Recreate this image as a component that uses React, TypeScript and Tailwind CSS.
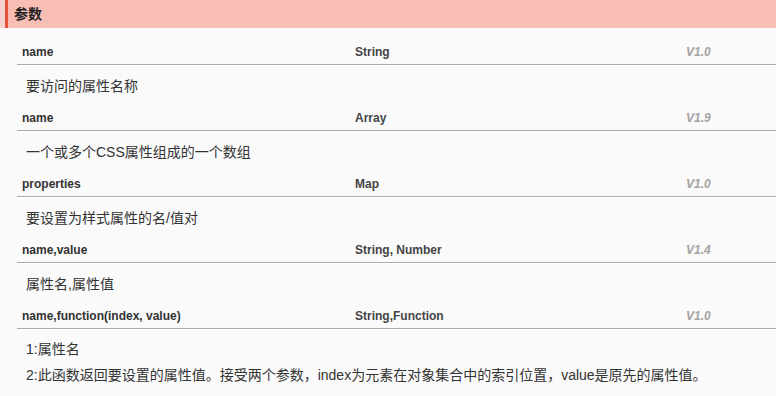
const rows = [
  { name: "name", type: "String", ver: "V1.0", desc: "要访问的属性名称" },
  { name: "name", type: "Array", ver: "V1.9", desc: "一个或多个CSS属性组成的一个数组" },
  { name: "properties", type: "Map", ver: "V1.0", desc: "要设置为样式属性的名/值对" },
  { name: "name,value", type: "String, Number", ver: "V1.4", desc: "属性名,属性值" },
  {
    name: "name,function(index, value)",
    type: "String,Function",
    ver: "V1.0",
    desc: [
      "1:属性名",
      "2:此函数返回要设置的属性值。接受两个参数，index为元素在对象集合中的索引位置，value是原先的属性值。",
    ],
  },
];

export default function App() {
  return (
    <div
      className="w-[776px] h-[396px] bg-[#fafafa] overflow-hidden text-[#333]"
      style={{ fontFamily: '"Liberation Sans", "Noto Sans CJK SC", sans-serif' }}
    >
      <div className="flex h-[28px] bg-[#f8bdb3]">
        <div className="w-[5px] bg-[#fad3cc]" />
        <div className="w-[3px] bg-[#e5533a]" />
        <div className="flex items-center pl-[6px] text-[14px] font-bold text-[#222]">参数</div>
      </div>

      <div className="ml-[17px] mt-[6px]">
        {rows.map((r, i) => (
          <div key={i}>
            <div className="grid grid-cols-[333px_331px_1fr] h-[31px] pt-[10px] border-b border-[#aaa] text-[12px] leading-[16px] font-bold">
              <div className="pl-[5px] text-[#333]">{r.name}</div>
              <div className="pl-[5px] text-[#444]">{r.type}</div>
              <div className="pl-[5px] italic text-[#a3a3a3]">{r.ver}</div>
            </div>
            {Array.isArray(r.desc) ? (
              <div className="border-t border-white pt-[6px] pl-[9px] text-[14px] leading-[26px]">
                {r.desc.map((d, j) => (
                  <div key={j}>{d}</div>
                ))}
              </div>
            ) : (
              <div className="h-[35px] border-t border-white pt-[11px] pl-[9px] text-[14px] leading-[18px]">
                {r.desc}
              </div>
            )}
          </div>
        ))}
      </div>
    </div>
  );
}
